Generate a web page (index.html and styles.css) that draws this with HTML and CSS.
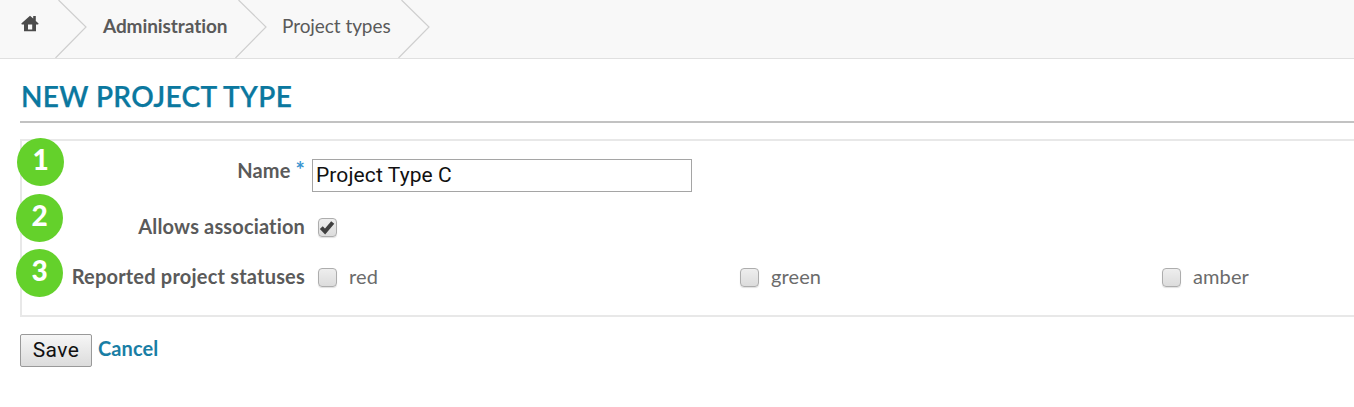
FILE: index.html
```html
<!DOCTYPE html>
<html lang="en">
<head>
<meta charset="utf-8">
<title>New project type</title>
<link rel="stylesheet" href="styles.css">
</head>
<body>
<nav class="breadcrumb">
  <a class="crumb crumb-home" aria-label="Home"><svg class="home" viewBox="0 0 18 17"><path fill="#4b4b4b" d="M9 .8 12.2 3.600V1h2.600V6L17.600 8.500l-.5.900H15v6.800H3V9.400H.8L.3 8.500z"/><path fill="#f8f8f8" d="M7 9.500h4.200v5H7z"/></svg></a>
  <svg class="chevron" viewBox="0 0 32 58"><path d="M3.500 0 31 27 .5 58"/></svg>
  <a class="crumb crumb-admin"><span>Administration</span></a>
  <svg class="chevron" viewBox="0 0 32 58"><path d="M3.500 0 31 27 .5 58"/></svg>
  <a class="crumb crumb-types"><span>Project types</span></a>
  <svg class="chevron" viewBox="0 0 32 58"><path d="M3.500 0 31 27 .5 58"/></svg>
</nav>
<main class="content">
  <h1 class="title"><span>NEW PROJECT TYPE</span></h1>
  <form class="form">
    <div class="panel">
      <div class="row row-name">
        <b class="badge">1</b>
        <label class="label name-label">Name <span class="required">*</span></label>
        <input class="name-input" type="text" value="Project Type C">
      </div>
      <div class="row row-association">
        <b class="badge badge-association">2</b>
        <label class="label association-label">Allows association</label>
        <span class="check"><svg class="tick" viewBox="0 0 14 14"><path d="M2 7.500 5.300 11 12 3"/></svg></span>
      </div>
      <div class="row row-status">
        <b class="badge badge-status">3</b>
        <span class="label status-label">Reported project statuses</span>
        <div class="options">
          <label class="option"><span class="check"></span><span class="red">red</span></label>
          <label class="option"><span class="check"></span><span class="green">green</span></label>
          <label class="option"><span class="check"></span><span class="amber">amber</span></label>
        </div>
      </div>
    </div>
    <div class="actions"><button class="save" type="button">Save</button><a class="cancel">Cancel</a></div>
  </form>
</main>
</body>
</html>
```
FILE: styles.css
```css
* { box-sizing: border-box; }
body { margin: 0; height: 407px; overflow: hidden; background: #fff; color: #5a5a5a; font: 20px/24px Lato, sans-serif; font-variant-ligatures: none; }
.breadcrumb { display: flex; height: 59px; background: #f8f8f8; border-bottom: 1px solid #e0e0e0; }
.crumb { padding-top: 14px; white-space: nowrap; font-size: 19px; }
.crumb-home { width: 55px; padding: 15px 0 0 21px; }
.home { display: block; width: 18px; height: 17px; }
.chevron { display: block; width: 32px; height: 58px; flex: none; }
.chevron path { fill: none; stroke: #cfcfcf; stroke-width: 1.2; }
.crumb-admin { width: 148px; padding-left: 16px; font-weight: 700; letter-spacing: -.08px; }
.crumb-types { width: 130.500px; padding-left: 15px; letter-spacing: -.06px; }
.content { padding: 22px 0 0 20px; }
.title { height: 42px; margin: 0 0 16px; padding-left: 1px; border-bottom: 2px solid #c2c2c2; color: #0b789f; font-size: 28px; line-height: 30px; font-weight: 600; letter-spacing: .34px; white-space: nowrap; -webkit-text-stroke: .25px #0b789f; }
.panel { height: 178px; padding-top: 19px; border: 2px solid #e8e8e8; border-right: 0; }
.row { position: relative; display: flex; white-space: nowrap; }
.row-name { height: 57px; }
.row-association { height: 50px; }
.label { width: 283px; margin-top: -2px; text-align: right; font-weight: 700; letter-spacing: .15px; flex: none; }
.name-label { margin-right: 7px; }
.required { color: #3a95d0; font-size: 22px; line-height: 20px; font-weight: 700; }
.name-input { width: 380px; height: 33px; margin: -1px 0 0; padding: 0 3px 1px; border: 1px solid #a5a5a5; outline: 0; color: #111; background: #fff; font: 21px Roboto, sans-serif; letter-spacing: .1px; }
.association-label { margin-top: -3px; margin-right: 13px; }
.status-label { margin-top: -3px; margin-right: 13px; letter-spacing: .2px; }
.check { display: block; width: 19px; height: 19px; margin-top: 1px; border: 1.500px solid #adadad; border-radius: 4px; background: linear-gradient(#eee, #dcdcdc); box-shadow: 0 1px 1px #e0e0e0; flex: none; }
.tick { display: block; width: 16px; height: 16px; }
.tick path { fill: none; stroke: #404040; stroke-width: 3.500; }
.options { display: grid; grid-template-columns: 422px 422px 1fr; flex: 1; }
.option { display: flex; gap: 12px; color: #6b6b6b; letter-spacing: .1px; line-height: 18px; }
.badge { position: absolute; left: -5px; top: -22px; width: 47px; height: 48px; border-radius: 50%; background: #64d12b; color: #fff; font: 900 28px/42px Lato, sans-serif; text-align: center; }
.badge-association { left: -6px; top: -23px; }
.badge-status { left: -6px; top: -18px; }
.actions { display: flex; padding-top: 17px; }
.save { width: 72px; height: 33px; padding: 0 0 1px; border: 1px solid #999; border-radius: 2px; background: linear-gradient(#f6f6f6, #dcdcdc); color: #111; font: 21px Roboto, sans-serif; letter-spacing: .4px; }
.cancel { margin: 2px 0 0 6px; color: #197ea5; font-weight: 700; letter-spacing: .1px; }
```
